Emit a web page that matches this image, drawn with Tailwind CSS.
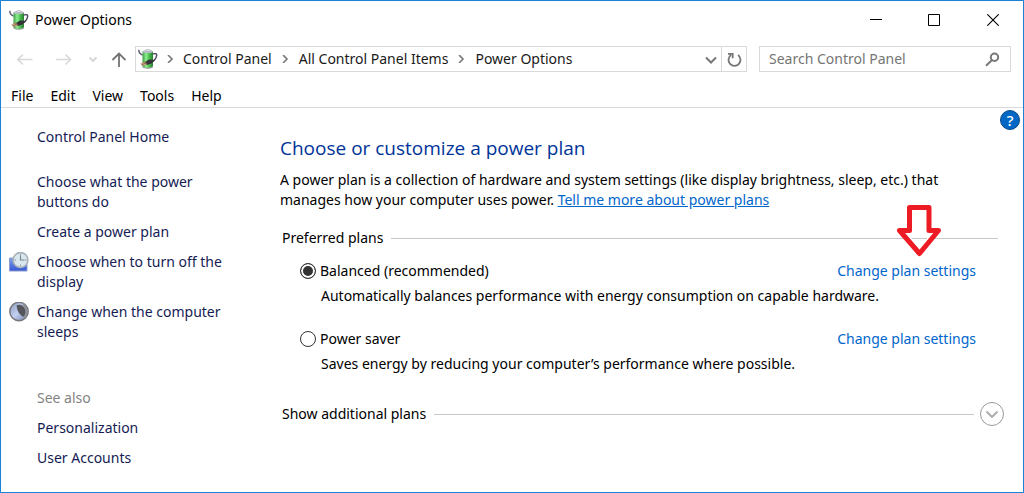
<!DOCTYPE html>
<html lang="en">
  <head>
    <meta charset="UTF-8" />
    <meta name="viewport" content="width=device-width, initial-scale=1.0" />
    <title>Power Options</title>
    <script src="https://cdn.jsdelivr.net/npm/@tailwindcss/browser@4"></script>
  </head>

  <body
    class="min-h-screen flex flex-col bg-white border border-[#1883d7] text-black text-[14px] leading-5 font-['Noto_Sans','Open_Sans',sans-serif]"
  >
    <!-- Shared icon -->
    <svg class="absolute w-0 h-0">
      <defs>
        <linearGradient id="green" x1="0" x2="1">
          <stop offset="0" stop-color="#3f9a45" />
          <stop offset="0.35" stop-color="#8df08f" />
          <stop offset="0.6" stop-color="#4cc552" />
          <stop offset="1" stop-color="#2c7a33" />
        </linearGradient>
        <symbol id="battery" viewBox="0 0 20 20">
          <path d="M.8.800q0 4 3.700 5.200" fill="none" stroke="#5b5c6c" stroke-width="1.400" />
          <path d="M15 5q4-1.200 3.700 1.500-.5 3.500-3.700 6" fill="none" stroke="#4c4d62" stroke-width="1.500" />
          <path d="M4.500 2.500v15q5 3 10.500 0v-15z" fill="url(#green)" />
          <path d="M4.500 17.200q5 3 10.500 0v1.300q-5 2.500-10.500 0z" fill="#8d9a90" />
          <ellipse cx="9.700" cy="2.600" rx="5.300" ry="1.600" fill="#b9bfc4" />
          <ellipse cx="9.700" cy="1.400" rx="2.400" ry="1" fill="#e4e8ea" stroke="#8b9298" stroke-width="0.500" />
          <path d="M7 13l4-2.500 6 .5-3.500 3.500-4.500 1.500z" fill="#35323a" />
          <path d="M2.500 14.500l4.500-2 2.500 3-5 1.500z" fill="#8a6b4d" />
          <path d="M3 14.800l3.500-1M4.500 16.300l3.500-1" stroke="#e0c29c" stroke-width="0.800" />
        </symbol>
      </defs>
    </svg>

    <!-- Title bar -->
    <header class="flex items-center h-[37px] pl-2">
      <svg class="w-5 h-5 mr-1.5"><use href="#battery" /></svg>
      <h1>Power Options</h1>
      <div class="flex ml-auto h-full">
        <button type="button" aria-label="Minimize" class="w-[58px] flex items-center justify-center hover:bg-gray-200">
          <svg class="w-3 h-3" viewBox="0 0 12 12"><path d="M0 5.500h12" stroke="#000" /></svg>
        </button>
        <button type="button" aria-label="Maximize" class="w-[58px] flex items-center justify-center hover:bg-gray-200">
          <svg class="w-3 h-3" viewBox="0 0 12 12"><path d="M.5.500h11v11H.5z" fill="none" stroke="#000" /></svg>
        </button>
        <button type="button" aria-label="Close" class="w-[60px] flex items-center justify-center hover:bg-red-500">
          <svg class="w-3 h-3" viewBox="0 0 12 12"><path d="M.3.300l11.400 11.400M11.700.300L.3 11.700" stroke="#000" stroke-width="1.100" /></svg>
        </button>
      </div>
    </header>

    <!-- Navigation -->
    <div class="flex items-center h-[42px] pr-3">
      <div class="flex items-center w-[134px] shrink-0 pl-4">
        <button type="button" aria-label="Back" disabled="">
          <svg class="w-4 h-4" viewBox="0 0 16 16" fill="none" stroke="#d9d9d9" stroke-width="1.600"><path d="M.8 8.500h14.700M6 3.500l-5 5 5 5" /></svg>
        </button>
        <button type="button" aria-label="Forward" class="ml-[23px]" disabled="">
          <svg class="w-4 h-4" viewBox="0 0 16 16" fill="none" stroke="#d9d9d9" stroke-width="1.600"><path d="M0 8.500h14.700M9.500 3.500l5 5-5 5" /></svg>
        </button>
        <button type="button" aria-label="Recent locations" class="ml-4">
          <svg class="w-2.5 h-2.5" viewBox="0 0 10 10" fill="none" stroke="#d4d4d4" stroke-width="1.800"><path d="M1.500 3.500L5 7l3.500-3.500" /></svg>
        </button>
        <button type="button" aria-label="Up" class="ml-3">
          <svg class="w-4 h-4" viewBox="0 0 16 16" fill="none" stroke="#737373" stroke-width="1.800"><path d="M9 16V2.500M2.500 9L9 2.500 15.500 9" /></svg>
        </button>
      </div>
      <div class="flex flex-1 h-[26px] border border-[#d9d9d9]">
        <nav class="flex flex-1 items-center pl-0.5 text-[#1a1a1a]">
          <svg class="w-5 h-5"><use href="#battery" /></svg>
          <svg class="w-2 h-2 ml-2 mr-[9px]" viewBox="0 0 8 8" fill="none" stroke="#777" stroke-width="1.600"><path d="M2 0l4 4-4 4" /></svg>
          <a href="#">Control Panel</a>
          <svg class="w-2 h-2 ml-[9px] mr-2.5" viewBox="0 0 8 8" fill="none" stroke="#777" stroke-width="1.600"><path d="M2 0l4 4-4 4" /></svg>
          <a href="#">All Control Panel Items</a>
          <svg class="w-2 h-2 ml-[9px] mr-2.5" viewBox="0 0 8 8" fill="none" stroke="#777" stroke-width="1.600"><path d="M2 0l4 4-4 4" /></svg>
          <a href="#">Power Options</a>
          <button type="button" aria-label="Previous locations" class="ml-auto mr-1">
            <svg class="w-3 h-3" viewBox="0 0 12 12" fill="none" stroke="#777" stroke-width="2"><path d="M1 4.500l5 5 5-5" /></svg>
          </button>
        </nav>
        <button type="button" aria-label="Refresh" class="w-[25px] flex items-center justify-center border-l border-[#d9d9d9]">
          <svg class="w-4 h-4" viewBox="0 0 16 16" fill="none" stroke="#777" stroke-width="1.800"><path d="M12 4A6 6 0 1 1 5 4M2 2.800h4.700v4.500" /></svg>
        </button>
      </div>
      <form class="flex items-center w-[252px] h-[26px] ml-3 pl-[9px] pr-2.5 border border-[#d9d9d9]">
        <input
          type="text"
          aria-label="Search Control Panel"
          placeholder="Search Control Panel"
          class="flex-1 min-w-0 outline-none placeholder:text-[#757575]"
        />
        <button type="submit" aria-label="Search">
          <svg class="w-4 h-4" viewBox="0 0 16 16" fill="none" stroke="#777" stroke-width="2"><circle cx="10.500" cy="6.300" r="3.700" /><path d="M8 9L2 14.800" /></svg>
        </button>
      </form>
    </div>

    <!-- Menu bar -->
    <div class="flex items-center gap-[17px] h-[28px] pl-2.5 pt-1 border-b border-[#d9d9d9]">
      <button type="button">File</button>
      <button type="button">Edit</button>
      <button type="button">View</button>
      <button type="button">Tools</button>
      <button type="button">Help</button>
    </div>

    <div class="relative flex flex-1">
      <button type="button" aria-label="Help" class="absolute top-0.5 right-[3px]">
        <svg class="w-5 h-5" viewBox="0 0 20 20">
          <circle cx="10" cy="10" r="9.500" fill="#0067c5" stroke="#0a4a86" />
          <text x="10" y="15.500" text-anchor="middle" font-size="15" font-weight="500" fill="#fff">?</text>
        </svg>
      </button>

      <!-- Sidebar -->
      <aside class="w-[243px] shrink-0 pl-2 pr-5 pt-[19px] text-[#151c55]">
        <a href="#" class="block pl-7">Control Panel Home</a>
        <ul class="mt-[25px] space-y-2.5">
          <li class="pl-7"><a href="#" class="block max-w-[170px]">Choose what the power buttons do</a></li>
          <li class="pl-7"><a href="#">Create a power plan</a></li>
          <li class="flex gap-2">
            <svg class="w-5 h-5 shrink-0" viewBox="0 0 20 20">
              <defs>
                <linearGradient id="screen" x1="0" y1="0" x2="0" y2="1"><stop offset="0" stop-color="#7fa0ea" /><stop offset="1" stop-color="#3558d4" /></linearGradient>
              </defs>
              <path d="M.5 6h17.500v13H.5z" fill="url(#screen)" stroke="#8c9bd0" />
              <circle cx="11.500" cy="8" r="7.400" fill="#dbe7ee" stroke="#a9b2b8" stroke-width="1.600" />
              <path d="M11.500 2v1.500M11.500 12.500V14M5.500 8H7M16 8h1.500" stroke="#8a979e" />
              <path d="M11.500 3.500V8h4" fill="none" stroke="#6f8590" stroke-width="1.100" />
            </svg>
            <a href="#">Choose when to turn off the display</a>
          </li>
          <li class="flex gap-2">
            <svg class="w-5 h-5 shrink-0" viewBox="0 0 20 20">
              <defs>
                <linearGradient id="moon" x1="0" y1="0" x2="1" y2="1"><stop offset="0" stop-color="#8a98b8" /><stop offset="0.500" stop-color="#c3d0f2" /><stop offset="1" stop-color="#6f7da6" /></linearGradient>
              </defs>
              <circle cx="10" cy="9.500" r="9.200" fill="url(#moon)" stroke="#77787e" stroke-width="1.500" />
              <path d="M7.500 3.500q4-2 7.500 1.500 3.500 5 .5 10-7-2-8-11.500z" fill="#55565c" />
              <path d="M14 2q6 6 1.500 13.500" fill="none" stroke="#8f9096" stroke-width="2" />
            </svg>
            <a href="#">Change when the computer sleeps</a>
          </li>
        </ul>
        <h2 class="pl-7 mt-[46px] text-[#838383]">See also</h2>
        <ul class="pl-7 mt-2.5 pb-5 space-y-2.5">
          <li><a href="#">Personalization</a></li>
          <li><a href="#">User Accounts</a></li>
        </ul>
      </aside>

      <!-- Content -->
      <main class="flex-1 min-w-0 pl-9 pr-[25px] pt-[26px]">
        <h2 class="text-[19px] leading-7 text-[#003399] font-['Open_Sans','Noto_Sans',sans-serif]">Choose or customize a power plan</h2>
        <p class="mt-2 max-w-[680px]">
          A power plan is a collection of hardware and system settings (like display brightness, sleep, etc.) that
          manages how your computer uses power.
          <a href="#" class="text-[#0066cc] underline">Tell me more about power plans</a>
        </p>

        <section class="mt-[18px]">
          <div class="flex items-center gap-2 pl-0.5">
            <h3>Preferred plans</h3>
            <div class="relative flex-1 border-t border-[#c8c8c8]">
              <!-- Arrow pointing at the settings link -->
              <svg class="absolute right-14 -top-[35px] w-[46px] h-[54px]" viewBox="0 0 46 54">
                <path d="M13.500 3.500h19.500v23h9.500L23.500 49.500 3.500 26.500h10z" fill="#fff" stroke="#ed1c24" stroke-width="5" stroke-linejoin="round" />
                <path d="M16 34.500h15" stroke="#c8c8c8" />
              </svg>
            </div>
          </div>

          <div class="mt-[13px] pl-5 pr-[22px]">
            <div class="flex items-center">
              <input type="radio" id="balanced" name="plan" checked="" class="appearance-none w-4 h-4 mr-1 rounded-full border border-[#333] checked:bg-[#333] checked:shadow-[inset_0_0_0_2px_#fff]" />
              <label for="balanced">Balanced (recommended)</label>
              <a href="#" class="ml-auto text-[#0066cc]">Change plan settings</a>
            </div>
            <p class="mt-[5px] pl-[21px]">Automatically balances performance with energy consumption on capable hardware.</p>
          </div>

          <div class="mt-[23px] pl-5 pr-[22px]">
            <div class="flex items-center">
              <input type="radio" id="saver" name="plan" class="appearance-none w-4 h-4 mr-1 rounded-full border border-[#333] checked:bg-[#333] checked:shadow-[inset_0_0_0_2px_#fff]" />
              <label for="saver">Power saver</label>
              <a href="#" class="ml-auto text-[#0066cc]">Change plan settings</a>
            </div>
            <p class="mt-[5px] pl-[21px]">Saves energy by reducing your computer’s performance where possible.</p>
          </div>
        </section>

        <div class="flex items-center gap-2 mt-7 pl-0.5 -mr-[6px]">
          <h3>Show additional plans</h3>
          <div class="flex-1 border-t border-[#c8c8c8]"></div>
          <button type="button" aria-label="Expand" class="-ml-0.5">
            <svg class="w-6 h-6" viewBox="0 0 24 24" fill="none">
              <circle cx="12" cy="12" r="11.500" stroke="#999" />
              <path d="M6.500 9.500L12 15l5.500-5.500" stroke="#aaa" stroke-width="1.800" />
            </svg>
          </button>
        </div>
      </main>
    </div>
  </body>
</html>
